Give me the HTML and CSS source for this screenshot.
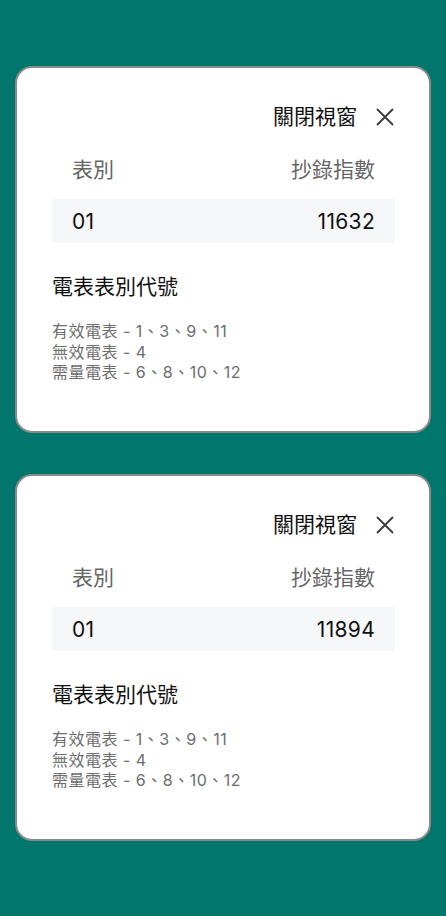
FILE: index.html
```html
<!DOCTYPE html>
<html lang="zh-Hant">
<head>
    <meta charset="UTF-8">
    <meta name="viewport" content="width=device-width, initial-scale=1.0">
    <title>電表表別代號</title>
    <link rel="stylesheet" href="styles.css">
</head>
<body>
    <div class="page">
        <div class="card">
            <div class="close-row">
                <span class="close-text">關閉視窗</span>
                <svg class="close-icon" width="18" height="18" viewBox="0 0 18 18">
                    <path d="M1 1 L17 17 M17 1 L1 17" stroke="#3a3a3a" stroke-width="1.8" fill="none"/>
                </svg>
            </div>
            <div class="table-head">
                <span>表別</span>
                <span>抄錄指數</span>
            </div>
            <div class="table-row">
                <span>01</span>
                <span>11632</span>
            </div>
            <h2 class="code-title">電表表別代號</h2>
            <div class="code-list">
                <div>有效電表 - 1、3、9、11</div>
                <div>無效電表 - 4</div>
                <div>需量電表 - 6、8、10、12</div>
            </div>
        </div>

        <div class="card">
            <div class="close-row">
                <span class="close-text">關閉視窗</span>
                <svg class="close-icon" width="18" height="18" viewBox="0 0 18 18">
                    <path d="M1 1 L17 17 M17 1 L1 17" stroke="#3a3a3a" stroke-width="1.8" fill="none"/>
                </svg>
            </div>
            <div class="table-head">
                <span>表別</span>
                <span>抄錄指數</span>
            </div>
            <div class="table-row">
                <span>01</span>
                <span>11894</span>
            </div>
            <h2 class="code-title">電表表別代號</h2>
            <div class="code-list">
                <div>有效電表 - 1、3、9、11</div>
                <div>無效電表 - 4</div>
                <div>需量電表 - 6、8、10、12</div>
            </div>
        </div>
    </div>
</body>
</html>
```

FILE: styles.css
```css
body {
    margin: 0;
    background: #00766c;
    font-family: "Inter", "Noto Sans CJK TC", sans-serif;
}
.page {
    display: flex;
    flex-direction: column;
    gap: 41px;
    padding: 66px 15px 0 15px;
}
.card {
    box-sizing: border-box;
    height: 367px;
    background: white;
    border: 2px solid #8a8a8a;
    border-radius: 17px;
    padding: 34px 34px 0 35px;
}
.close-row {
    display: flex;
    justify-content: flex-end;
    align-items: center;
    height: 30px;
}
.close-text {
    font-size: 21px;
    color: #111;
    line-height: 30px;
}
.close-icon {
    margin-left: 19px;
    margin-right: 1px;
}
.table-head {
    display: flex;
    justify-content: space-between;
    padding: 0 20px;
    margin-top: 23px;
    font-size: 21px;
    line-height: 30px;
    color: #666;
}
.table-row {
    display: flex;
    justify-content: space-between;
    align-items: center;
    height: 44px;
    margin-top: 14px;
    padding: 0 20px;
    background: #f6f7f9;
    font-size: 21px;
    letter-spacing: 0.3px;
    color: #111;
}
.code-title {
    margin: 29px 0 0 0;
    font-size: 21px;
    font-weight: normal;
    line-height: 30px;
    color: #111;
}
.code-list {
    margin-top: 19px;
    font-size: 16px;
    line-height: 20.5px;
    letter-spacing: 0.5px;
    color: #6e6e6e;
}
```
